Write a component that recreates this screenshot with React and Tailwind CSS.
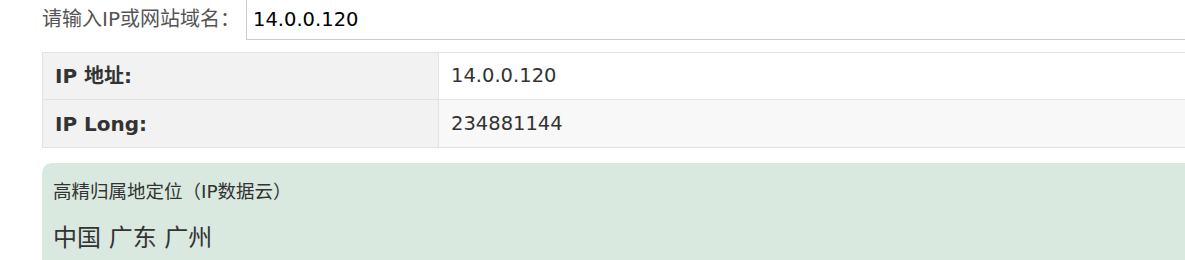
import React from 'react';

const FONT = "font-['DejaVu_Sans','Noto_Sans_CJK_SC',sans-serif]";

const rows = [
  { label: 'IP 地址:', value: '14.0.0.120', bg: 'bg-white', h: 'h-[47px]' },
  { label: 'IP Long:', value: '234881144', bg: 'bg-[#f8f8f8]', h: 'h-[48px]' },
];

export default function App() {
  return (
    <div className={`w-[1185px] h-[260px] overflow-hidden bg-white ${FONT}`}>
      <div className="pl-[42px] w-[1400px]">
        {/* Query input row */}
        <div className="flex items-center h-[40px]">
          <div className="w-[204px] text-[20px] text-[#555] leading-none -mt-[2px] whitespace-nowrap">请输入IP或网站域名：</div>
          <div className="flex-1 h-[52px] -mt-[12px] pt-[12px] border border-[#ccc] pl-[6px] flex items-center text-[19.5px] text-black">
            14.0.0.120
          </div>
        </div>

        {/* Result table */}
        <div className="mt-[12px] border-t border-l border-[#e2e2e2]">
          {rows.map((r) => (
            <div key={r.label} className={`flex ${r.h} border-b border-[#e2e2e2]`}>
              <div className="w-[396px] shrink-0 bg-[#f2f2f2] border-r border-[#e2e2e2] px-3 flex items-center font-bold text-[20px] text-[#333]">
                {r.label}
              </div>
              <div className={`flex-1 ${r.bg} px-3 flex items-center text-[19.5px] text-[#333]`}>{r.value}</div>
            </div>
          ))}
        </div>

        {/* Location box */}
        <div className="mt-[15px] rounded-[10px] bg-[#d9e9e0] pl-[11px] pt-[17px] pb-6 text-[#333]">
          <div className="text-[18.5px] leading-6">高精归属地定位（IP数据云）</div>
          <div className="mt-[18px] text-[24px] leading-8">中国 广东 广州</div>
        </div>
      </div>
    </div>
  );
}
